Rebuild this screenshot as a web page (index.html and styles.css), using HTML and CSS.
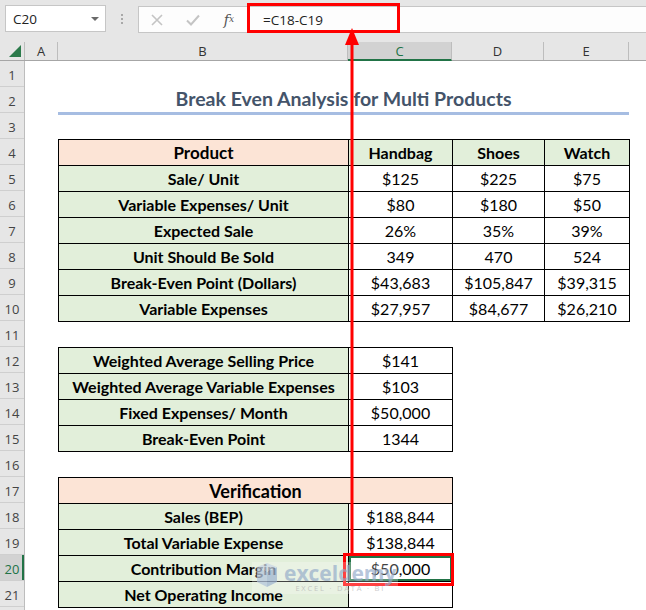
FILE: index.html
```html
<!DOCTYPE html>
<html lang="en">
<head>
    <meta charset="UTF-8">
    <title>Break Even Analysis for Multi Products</title>
    <link rel="stylesheet" href="styles.css">
</head>
<body>
    <div class="window">
        <div class="ribbon">
            <div class="name-box"><span>C20</span><span class="caret"></span></div>
            <div class="grip"><i></i><i></i><i></i></div>
            <div class="formula-bar">
                <div class="fx-tools">
                    <span class="tool">
                        <svg width="12" height="12" viewBox="0 0 12 12"><path d="M1 1L11 11M11 1L1 11" stroke="#c4c4c4" stroke-width="1.6" fill="none"/></svg>
                    </span>
                    <span class="tool">
                        <svg width="14" height="12" viewBox="0 0 14 12"><path d="M1 6.5L5 10.5L13 1.5" stroke="#c4c4c4" stroke-width="2" fill="none"/></svg>
                    </span>
                    <span class="tool fx">f<sub>x</sub></span>
                </div>
                <div class="formula-input">=C18-C19</div>
            </div>
        </div>

        <div class="col-heads">
            <div class="corner">
                <svg width="12" height="12" viewBox="0 0 12 12"><polygon points="12,0 12,12 0,12" fill="#2b7a4b"/></svg>
            </div>
            <div class="col-head col-a">A</div>
            <div class="col-head col-b">B</div>
            <div class="col-head col-c active">C</div>
            <div class="col-head col-d">D</div>
            <div class="col-head col-e">E</div>
            <div class="col-head col-f"></div>
        </div>

        <div class="sheet">
            <div class="row-heads">
                <div class="row-head">1</div>
                <div class="row-head">2</div>
                <div class="row-head">3</div>
                <div class="row-head">4</div>
                <div class="row-head">5</div>
                <div class="row-head">6</div>
                <div class="row-head">7</div>
                <div class="row-head">8</div>
                <div class="row-head">9</div>
                <div class="row-head">10</div>
                <div class="row-head">11</div>
                <div class="row-head">12</div>
                <div class="row-head">13</div>
                <div class="row-head">14</div>
                <div class="row-head">15</div>
                <div class="row-head">16</div>
                <div class="row-head">17</div>
                <div class="row-head">18</div>
                <div class="row-head">19</div>
                <div class="row-head active">20</div>
                <div class="row-head">21</div>
                <div class="row-head"></div>
            </div>

            <div class="cells">
                <div class="title">Break Even Analysis for Multi Products</div>

                <table class="data products">
                    <colgroup><col class="w-b"><col class="w-c"><col class="w-d"><col class="w-e"></colgroup>
                    <tr>
                        <th class="peach head">Product</th>
                        <th class="green">Handbag</th>
                        <th class="green">Shoes</th>
                        <th class="green">Watch</th>
                    </tr>
                    <tr><th class="green">Sale/ Unit</th><td>$125</td><td>$225</td><td>$75</td></tr>
                    <tr><th class="green">Variable Expenses/ Unit</th><td>$80</td><td>$180</td><td>$50</td></tr>
                    <tr><th class="green">Expected Sale</th><td>26%</td><td>35%</td><td>39%</td></tr>
                    <tr><th class="green">Unit Should Be Sold</th><td>349</td><td>470</td><td>524</td></tr>
                    <tr><th class="green">Break-Even Point (Dollars)</th><td>$43,683</td><td>$105,847</td><td>$39,315</td></tr>
                    <tr><th class="green">Variable Expenses</th><td>$27,957</td><td>$84,677</td><td>$26,210</td></tr>
                </table>

                <table class="data weighted">
                    <colgroup><col class="w-b"><col class="w-c"></colgroup>
                    <tr><th class="green">Weighted Average Selling Price</th><td>$141</td></tr>
                    <tr><th class="green">Weighted Average Variable Expenses</th><td>$103</td></tr>
                    <tr><th class="green">Fixed Expenses/ Month</th><td>$50,000</td></tr>
                    <tr><th class="green">Break-Even Point</th><td>1344</td></tr>
                </table>

                <table class="data verify">
                    <colgroup><col class="w-b"><col class="w-c"></colgroup>
                    <tr><th class="peach head big" colspan="2">Verification</th></tr>
                    <tr><th class="green">Sales (BEP)</th><td>$188,844</td></tr>
                    <tr><th class="green">Total Variable Expense</th><td>$138,844</td></tr>
                    <tr><th class="green">Contribution Margin</th><td class="selected">$50,000</td></tr>
                    <tr><th class="green">Net Operating Income</th><td></td></tr>
                </table>
            </div>
        </div>

        <div class="formula-mark"></div>
        <svg class="arrow" width="14" height="527" viewBox="0 0 14 527">
            <line x1="7" y1="14" x2="7" y2="527" stroke="#ff0000" stroke-width="3"/>
            <polygon points="0,17 7,0 14,17" fill="#ff0000"/>
        </svg>
        <div class="cell-mark"></div>

        <div class="watermark">
            <svg class="wm-logo" width="26" height="26" viewBox="0 0 26 26">
                <polygon points="3,4 13,9 13,24 3,19" fill="#b7c7de"/>
                <polygon points="13,9 23,4 23,19 13,24" fill="#a3b7d4"/>
                <polygon points="3,4 13,0 23,4 13,9" fill="#cdd8e8"/>
            </svg>
            <div class="wm-text">
                <span class="wm-name">exceldemy</span>
                <span class="wm-tag">EXCEL · DATA · BI</span>
            </div>
        </div>
    </div>
</body>
</html>
```

FILE: styles.css
```css
body {
    margin: 0;
    background: #fff;
    font-family: Lato, "Liberation Sans", sans-serif;
}

.window {
    position: relative;
    width: 646px;
    height: 610px;
    overflow: hidden;
}

/* formula bar */

.ribbon {
    height: 42px;
    background: #e6e6e6;
    display: flex;
    align-items: flex-start;
    padding-top: 5px;
    box-sizing: border-box;
    font-family: "Open Sans", "Noto Sans", sans-serif;
}

.name-box {
    margin-left: 5px;
    width: 101px;
    height: 27px;
    background: #fff;
    border: 1px solid #c6c6c6;
    box-sizing: border-box;
    display: flex;
    align-items: center;
    justify-content: space-between;
    padding: 0 6px 0 7px;
    font-size: 13.5px;
    color: #222;
}

.caret {
    width: 0;
    height: 0;
    border-left: 4px solid transparent;
    border-right: 4px solid transparent;
    border-top: 4px solid #6a6a6a;
}

.grip {
    width: 32px;
    height: 27px;
    display: flex;
    flex-direction: column;
    align-items: center;
    justify-content: center;
    gap: 2px;
}

.grip i {
    width: 2px;
    height: 2px;
    background: #a8a8a8;
}

.formula-bar {
    margin-top: 1px;
    flex: 1;
    height: 25px;
    background: #fdfdfd;
    border: 1px solid #c6c6c6;
    border-right: none;
    display: flex;
    align-items: center;
}

.fx-tools {
    width: 108px;
    display: flex;
    align-items: center;
}

.tool {
    width: 36px;
    display: flex;
    justify-content: center;
    align-items: center;
}

.fx {
    font-family: "DejaVu Serif", "Liberation Serif", serif;
    font-style: italic;
    font-size: 14px;
    color: #555;
    line-height: 1;
}

.fx sub {
    font-size: 9px;
    vertical-align: -1px;
}

.formula-input {
    padding-left: 16px;
    font-size: 13.5px;
    color: #222;
}

/* grid headers */

.col-heads {
    display: flex;
    height: 19px;
    background: #e6e6e6;
    border-bottom: 1px solid #a6a6a6;
    box-sizing: border-box;
    font-family: "Open Sans", "Noto Sans", sans-serif;
    font-size: 13px;
    color: #333;
}

.corner {
    width: 25px;
    display: flex;
    align-items: flex-end;
    justify-content: flex-end;
    padding: 0 3px 3px 0;
    box-sizing: border-box;
    border-right: 1px solid #bdbdbd;
}

.col-head {
    display: flex;
    align-items: center;
    justify-content: center;
    border-right: 1px solid #bdbdbd;
    box-sizing: border-box;
}

.col-a { width: 33px; }
.col-b { width: 290px; }
.col-c { width: 104px; }
.col-d { width: 92px; }
.col-e { width: 85px; }
.col-f { flex: 1; border-right: none; }

.col-head.active {
    background: #d2d2d2;
    color: #217346;
    border-bottom: 2px solid #217346;
    margin-bottom: -1px;
}

.sheet {
    display: flex;
}

.row-heads {
    width: 25px;
    background: #e6e6e6;
    border-right: 1px solid #bdbdbd;
    box-sizing: border-box;
    font-family: "Open Sans", "Noto Sans", sans-serif;
    font-size: 13px;
    color: #444;
}

.row-head {
    height: 26px;
    border-bottom: 1px solid #cfcfcf;
    box-sizing: border-box;
    display: flex;
    align-items: flex-end;
    justify-content: center;
    padding-bottom: 2px;
}

.row-head.active {
    background: #d2d2d2;
    color: #217346;
    box-shadow: inset -2px 0 0 #217346;
}

/* worksheet cells */

.cells {
    flex: 1;
    display: grid;
    grid-template-columns: 33px 290px 104px 92px 85px 1fr;
    grid-template-rows: repeat(22, 26px);
}

.title {
    grid-row: 2;
    grid-column: 2 / 6;
    height: 28px;
    border-bottom: 3px solid #a6bde2;
    box-sizing: border-box;
    text-align: center;
    font-weight: bold;
    font-size: 19.5px;
    color: #44546a;
    line-height: 24px;
}

.data {
    border-collapse: collapse;
    table-layout: fixed;
    width: 100%;
    height: 100%;
    font-size: 16px;
    color: #000;
}

.data tr {
    height: 26px;
}

.data th,
.data td {
    border: 1px solid #000;
    padding: 0;
    text-align: center;
    white-space: nowrap;
    line-height: 18px;
}

.data td {
    background: #fff;
}

.w-b { width: 290px; }
.w-c { width: 104px; }
.w-d { width: 92px; }
.w-e { width: 85px; }

.products {
    grid-row: 4 / 11;
    grid-column: 2 / 6;
}

.weighted {
    grid-row: 12 / 16;
    grid-column: 2 / 4;
}

.verify {
    grid-row: 17 / 22;
    grid-column: 2 / 4;
}

.peach {
    background: #fce4d6;
}

.green {
    background: #e2efda;
}

.head {
    font-size: 17px;
}

.head.big {
    font-size: 18px;
}

.selected {
    box-shadow: inset 0 0 0 2px #217346;
}

/* annotations */

.formula-mark {
    position: absolute;
    left: 247px;
    top: 3px;
    width: 153px;
    height: 30px;
    border: 3px solid #ff0000;
    box-sizing: border-box;
}

.arrow {
    position: absolute;
    left: 345px;
    top: 28px;
}

.cell-mark {
    position: absolute;
    left: 343px;
    top: 553px;
    width: 111px;
    height: 33px;
    border: 3px solid #ff0000;
    box-sizing: border-box;
}

.watermark {
    position: absolute;
    left: 252px;
    top: 562px;
    display: flex;
    align-items: flex-start;
    gap: 4px;
    padding: 1px 2px;
    background: rgba(255, 255, 255, 0.35);
    opacity: 0.75;
}

.wm-text {
    display: flex;
    flex-direction: column;
    align-items: center;
}

.wm-name {
    font-family: "Open Sans", sans-serif;
    font-weight: bold;
    font-size: 21px;
    line-height: 20px;
    color: #9fb3cf;
}

.wm-tag {
    font-family: "Open Sans", sans-serif;
    font-size: 7.5px;
    letter-spacing: 1.8px;
    color: #b9b9b9;
}
```
